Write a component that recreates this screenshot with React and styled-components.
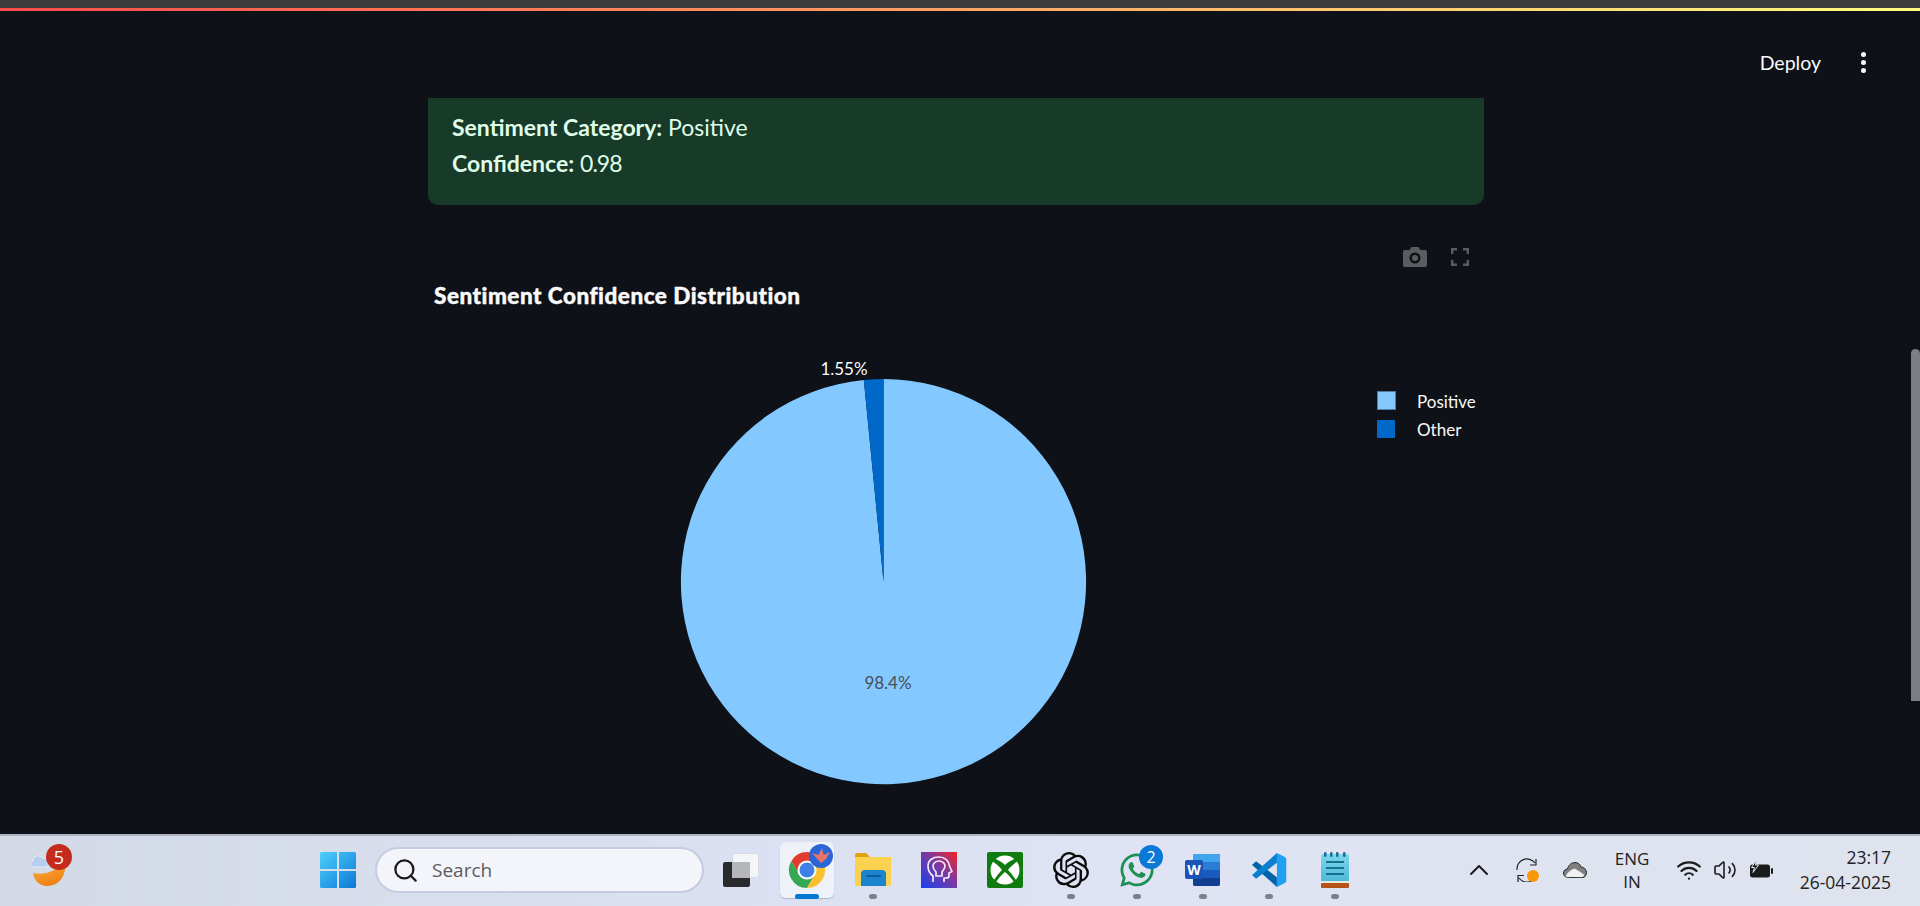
import React from 'react'
import styled, { createGlobalStyle } from 'styled-components'
import { ChevronUp, Search, Volume2, Wifi } from 'lucide-react'
import { SiOpenai } from 'react-icons/si'
import { FaWhatsapp } from 'react-icons/fa'

const GlobalStyle = createGlobalStyle`
  html, body {
    margin: 0;
    height: 100%;
    background: #0e1117;
    overflow: hidden;
  }
  #root {
    height: 100%;
  }
`

const Screen = styled.div`
  display: flex;
  flex-direction: column;
  height: 906px;
  width: 1920px;
  position: relative;
  font-family: 'Lato', 'Noto Sans', sans-serif;
`

const BrowserEdge = styled.div`
  height: 8px;
  background: #3c3c3c;
  flex-shrink: 0;
`

const Decoration = styled.div`
  height: 3px;
  background: linear-gradient(90deg, #ff4b4b, #fffd80);
  flex-shrink: 0;
`

const Main = styled.main`
  flex: 1;
  min-height: 0;
  overflow: hidden;
  background: #0e1117;
  padding-right: 8px;
`

const Header = styled.header`
  height: 87px;
  display: flex;
  align-items: center;
  justify-content: flex-end;
  padding: 16px 0 0;
  gap: 40px;
  box-sizing: border-box;
`

const DeployLabel = styled.span`
  color: #fafafa;
  font-size: 19.5px;
`

const Kebab = styled.div`
  display: flex;
  flex-direction: column;
  gap: 3px;
  margin-right: 46px;

  i {
    display: block;
    width: 5px;
    height: 5px;
    border-radius: 50%;
    background: #fafafa;
  }
`

const Column = styled.div`
  width: 1056px;
  margin: 0 auto;
`

const SuccessBox = styled.div`
  background: #183a29;
  color: #dffde9;
  border-radius: 0 0 10px 10px;
  padding: 11px 24px 24px;
  font-size: 23px;
  line-height: 36px;

  strong {
    font-weight: 700;
  }
`

const Score = styled.span`
  letter-spacing: -1px;
`

const ChartFrame = styled.div`
  position: relative;
  margin-top: 32px;
  height: 597px;
`

const ChartSvg = styled.svg`
  display: block;
  width: 1056px;
  height: 597px;
`

const ChartTitle = styled.text`
  font-size: 22.5px;
  font-weight: 900;
  letter-spacing: 0.5px;
  fill: #fafafa;
  stroke: #fafafa;
  stroke-width: 0.4px;
`

const PieLabel = styled.text`
  font-size: 17px;
  text-anchor: middle;
  fill: ${(p) => p.$fill};
`

const LegendText = styled.text`
  font-size: 17px;
  fill: #fafafa;
`

const ModeBar = styled.div`
  position: absolute;
  top: 10px;
  right: 15px;
  display: flex;
  align-items: center;
  gap: 24px;
  color: #5a5c60;
`

const Thumb = styled.div`
  position: absolute;
  right: 0;
  top: 349px;
  width: 9px;
  height: 352px;
  border-radius: 5px 5px 0 0;
  background: #7d7e82;
`

const Taskbar = styled.footer`
  height: 72px;
  flex-shrink: 0;
  box-sizing: border-box;
  border-top: 2px solid #aeb3c1;
  background: linear-gradient(90deg, #d3dae6 0%, #dbe1f2 40%, #dfe3f3 60%, #dee3ee 100%);
  display: flex;
  align-items: center;
  padding-bottom: 2px;
  color: #1c1c1c;
`

const WidgetSlot = styled.div`
  position: relative;
  width: 305px;
  height: 100%;
  flex-shrink: 0;
`

const WeatherIcon = styled.div`
  position: absolute;
  left: 28px;
  top: 13px;
`

const Badge = styled.span`
  position: absolute;
  display: flex;
  align-items: center;
  justify-content: center;
  border-radius: 50%;
  color: #fff;
  font-family: 'Open Sans', sans-serif;
  width: ${(p) => p.$size}px;
  height: ${(p) => p.$size}px;
  background: ${(p) => p.$bg};
  font-size: ${(p) => p.$size - 8}px;
  right: ${(p) => p.$right}px;
  top: ${(p) => p.$top}px;
`

const TaskButton = styled.div`
  position: relative;
  width: 66px;
  height: 68px;
  flex-shrink: 0;
  display: flex;
  align-items: center;
  justify-content: center;
`

const ActiveTile = styled.div`
  position: absolute;
  left: 6px;
  right: 6px;
  top: 6px;
  bottom: 6px;
  border-radius: 6px;
  background: rgba(255, 255, 255, 0.55);
  box-shadow: 0 1px 1px rgba(120, 125, 150, 0.45);
`

const RunDot = styled.span`
  position: absolute;
  bottom: 5px;
  left: 50%;
  transform: translateX(-50%);
  height: 5px;
  border-radius: 3px;
  width: ${(p) => (p.$active ? 24 : 8)}px;
  background: ${(p) => (p.$active ? '#0078d4' : '#7e8089')};
`

const IconLayer = styled.div`
  position: relative;
  display: flex;
`

const SearchSlot = styled.div`
  width: 337px;
  flex-shrink: 0;
  box-sizing: border-box;
  padding: 0 4px 0 4px;
`

const SearchBox = styled.div`
  height: 46px;
  box-sizing: border-box;
  border-radius: 23px;
  background: #f3f5fb;
  border: 2px solid #c6cce0;
  display: flex;
  align-items: center;
  gap: 13px;
  padding-left: 15px;
  color: #5c5c5c;
  font-family: 'Open Sans', sans-serif;
  font-size: 19px;

  svg {
    color: #1a1a1a;
  }
`

const Tray = styled.div`
  margin-left: auto;
  display: flex;
  align-items: center;
  padding-right: 29px;
  font-family: 'Open Sans', sans-serif;
`

const TraySlot = styled.div`
  position: relative;
  width: ${(p) => p.$w}px;
  display: flex;
  align-items: center;
  justify-content: center;
`

const StatusGroup = styled.div`
  display: flex;
  align-items: center;
  margin-left: 6px;
`

const StatusDot = styled.span`
  position: absolute;
  right: 12px;
  bottom: 0;
  width: 12px;
  height: 12px;
  border-radius: 50%;
  background: #f7980b;
`

const LangText = styled.div`
  text-align: center;
  font-size: 17px;
  line-height: 23px;
  color: #222;
`

const Clock = styled.div`
  width: 112px;
  text-align: right;
  font-size: 17.5px;
  line-height: 25px;
  color: #222;
`

// pie data, clockwise from the top like plotly does it
const slices = [
  { name: 'Positive', share: 0.9845, color: '#83c9ff' },
  { name: 'Other', share: 0.0155, color: '#0068c9' },
]

function slicePath(cx, cy, r, from, to) {
  const point = (t) => {
    const a = t * 2 * Math.PI
    return `${cx + r * Math.sin(a)} ${cy - r * Math.cos(a)}`
  }
  const large = to - from > 0.5 ? 1 : 0
  return `M${cx} ${cy} L${point(from)} A${r} ${r} 0 ${large} 1 ${point(to)} Z`
}

function PieChart() {
  let start = 0
  return (
    <ChartSvg viewBox="0 0 1056 597">
      <ChartTitle x="6" y="67">Sentiment Confidence Distribution</ChartTitle>
      {slices.map((s) => {
        const d = slicePath(455.5, 344.6, 202.6, start, start + s.share)
        start += s.share
        return <path key={s.name} d={d} fill={s.color} />
      })}
      <PieLabel x="416" y="138" $fill="#fafafa">1.55%</PieLabel>
      <PieLabel x="460" y="452" $fill="#4a4f57">98.4%</PieLabel>
      <rect x="949.5" y="154.5" width="18" height="18" fill="#83c9ff" stroke="#4f7da3" />
      <rect x="949" y="183" width="18" height="18" fill="#0068c9" />
      <LegendText x="989" y="171">Positive</LegendText>
      <LegendText x="989" y="199">Other</LegendText>
    </ChartSvg>
  )
}

const CameraIcon = () => (
  <svg width="24" height="20" viewBox="0 0 24 20">
    <path
      fillRule="evenodd"
      fill="currentColor"
      d="M2 3h4.500L8.500 0h7l2 3H22a2 2 0 0 1 2 2v13a2 2 0 0 1-2 2H2a2 2 0 0 1-2-2V5a2 2 0 0 1 2-2zM12 5.500a5.500 5.500 0 1 0 0 11 5.500 5.500 0 0 0 0-11zM12 8a3 3 0 1 1 0 6 3 3 0 0 1 0-6z"
    />
  </svg>
)

const FullscreenIcon = () => (
  <svg width="18" height="18" viewBox="0 0 18 18" fill="none" stroke="currentColor" strokeWidth="2.4">
    <path d="M1.200 6V1.200H6M12 1.200h4.800V6M16.800 12v4.800H12M6 16.800H1.200V12" />
  </svg>
)

const WeatherGlyph = () => (
  <svg width="46" height="44" viewBox="0 0 46 44">
    <defs>
      <linearGradient id="moon" x1="0.2" y1="0" x2="0.6" y2="1">
        <stop offset="0" stopColor="#fcb13c" />
        <stop offset="1" stopColor="#ee7f14" />
      </linearGradient>
    </defs>
    <path d="M5 24C14 26 30 24 36 10C40 22 34 37 19 37C11 37 6 31 5 24Z" fill="url(#moon)" />
    <path d="M5 18C1 18 1 12 5 12C5 7 12 5 14 9C18 8 21 12 20 18Z" fill="#b6cef0" stroke="#e8effa" />
  </svg>
)

const WindowsIcon = () => (
  <svg width="36" height="36" viewBox="0 0 36 36">
    <defs>
      <linearGradient id="win" x1="0" y1="0" x2="1" y2="1">
        <stop offset="0" stopColor="#4fd0fb" />
        <stop offset="1" stopColor="#0a78d6" />
      </linearGradient>
    </defs>
    <path d="M0 1.500A1.500 1.500 0 0 1 1.500 0H17v17H0zM19 0h15.500A1.500 1.500 0 0 1 36 1.500V17H19zM0 19h17v17H1.500A1.500 1.500 0 0 1 0 34.500zM19 19h17v15.500a1.500 1.500 0 0 1-1.500 1.500H19z" fill="url(#win)" />
  </svg>
)

const TaskViewIcon = () => (
  <svg width="36" height="36" viewBox="0 0 36 36">
    <rect x="9.500" y="1.500" width="26" height="24" rx="2" fill="#f4f5f9" stroke="#d8dae2" />
    <rect x="0" y="10" width="27" height="25" rx="2" fill="#2a2a2c" />
    <rect x="9" y="10" width="18" height="16" fill="#b5b6b8" />
  </svg>
)

const ChromeIcon = () => (
  <svg width="56" height="56" viewBox="0 0 56 56">
    <path d="M28 19H43.600A18 18 0 0 0 12.400 19L20.200 32.500Z" fill="#e33b2e" />
    <path d="M12.400 19A18 18 0 0 0 28 46L35.800 32.500H20.200Z" fill="#34a853" />
    <path d="M43.600 19A18 18 0 0 1 28 46L35.800 32.500L28 19Z" fill="#fbc02d" />
    <circle cx="28" cy="28" r="9.500" fill="#fff" />
    <circle cx="28" cy="28" r="7.500" fill="#3f7fe8" />
    <circle cx="42" cy="14" r="12" fill="#2b66d9" />
    <path d="M42 21L33 11L39.500 13L43 6L44.500 13L51 10L47 17Z" fill="#e8756a" />
  </svg>
)

const FolderIcon = () => (
  <svg width="36" height="36" viewBox="0 0 36 36">
    <path d="M0 3a2 2 0 0 1 2-2h9l4 4h19a2 2 0 0 1 2 2v4H0z" fill="#e0a30e" />
    <path d="M0 5h36v28a1 1 0 0 1-1 1H1a1 1 0 0 1-1-1z" fill="#fbd24f" />
    <path d="M6 34V22a4 4 0 0 1 4-4h17a4 4 0 0 1 4 4v12z" fill="#1c83cf" />
    <rect x="11" y="23" width="15" height="2" rx="1" fill="#0d5c9c" />
  </svg>
)

const AppIcon = () => (
  <svg width="36" height="36" viewBox="0 0 36 36">
    <defs>
      <linearGradient id="app" x1="0" y1="1" x2="1" y2="0">
        <stop offset="0" stopColor="#1642f0" />
        <stop offset="0.55" stopColor="#7a3aa0" />
        <stop offset="1" stopColor="#f52424" />
      </linearGradient>
    </defs>
    <rect width="36" height="36" fill="url(#app)" />
    <g fill="none" stroke="#f4e9fb" strokeWidth="1.700" strokeLinejoin="round">
      <path d="M12 30V24C8 21 7 17 7 14C7 8 12 5 18 5C24 5 28 9 28.500 14L31 19.500L28 21V24C28 25.500 27 26 25 26H23V30" />
      <path d="M15 24V20C13 18 12 16 12 14C12 11 15 9 18 9C21 9 24 11 24 14C24 17 22 18 21 20V24Z" />
    </g>
  </svg>
)

const XboxIcon = () => (
  <svg width="36" height="36" viewBox="0 0 36 36">
    <rect width="36" height="36" rx="2" fill="#107c10" />
    <circle cx="18" cy="18" r="14.500" fill="#fff" />
    <path
      d="M5 6C10 7 15 10 18 13C21 10 26 7 31 6L32 8C28 11 23 15 21 18C25 22 29 28 31 31L29 33C25 27 21 22 18 20C15 22 11 27 7 33L5 31C7 28 11 22 15 18C13 15 8 11 4 8Z"
      fill="#107c10"
    />
  </svg>
)

const WordIcon = () => (
  <svg width="36" height="36" viewBox="0 0 36 36">
    <rect x="8" y="2" width="27" height="32" rx="2" fill="#185abd" />
    <path d="M8 4a2 2 0 0 1 2-2h23a2 2 0 0 1 2 2v6H8z" fill="#41a5ee" />
    <rect x="8" y="10" width="27" height="8" fill="#2b7cd3" />
    <path d="M8 26h27v6a2 2 0 0 1-2 2H10a2 2 0 0 1-2-2z" fill="#103f91" />
    <rect x="0" y="8" width="18" height="19" rx="2" fill="#1a54b8" />
    <text x="9" y="22.500" fontSize="14" fontWeight="700" textAnchor="middle" fill="#fff" fontFamily="Open Sans, sans-serif">W</text>
  </svg>
)

const VsCodeIcon = () => (
  <svg width="36" height="36" viewBox="0 0 100 100">
    <path d="M72 97V70L14 26L3 36Z" fill="#0065a9" />
    <path d="M72 3V30L14 74L3 64Z" fill="#0a80cf" />
    <path d="M72 3L94 14C97 16 98 18 98 21V79C98 82 97 84 94 86L72 97Z" fill="#1fa0f2" />
  </svg>
)

const NotepadIcon = () => (
  <svg width="30" height="36" viewBox="0 0 30 36">
    <defs>
      <linearGradient id="pad" x1="0" y1="0" x2="0" y2="1">
        <stop offset="0" stopColor="#7fd6ee" />
        <stop offset="1" stopColor="#4cb8d6" />
      </linearGradient>
    </defs>
    <rect x="1" y="2" width="28" height="28" rx="2" fill="url(#pad)" />
    <rect x="1" y="31" width="28" height="5" rx="1" fill="#b5551a" />
    <rect x="1" y="29" width="28" height="2" fill="#eae8e0" />
    <g fill="#16708f">
      <rect x="4" y="0" width="2.500" height="5" rx="1.200" />
      <rect x="10" y="0" width="2.500" height="5" rx="1.200" />
      <rect x="16" y="0" width="2.500" height="5" rx="1.200" />
      <rect x="23" y="0" width="2.500" height="5" rx="1.200" />
      <rect x="6" y="9" width="18" height="2" />
      <rect x="6" y="15" width="18" height="2" />
      <rect x="6" y="21" width="18" height="2" />
    </g>
  </svg>
)

const SyncIcon = () => (
  <svg width="24" height="24" viewBox="0 0 24 24" fill="none" stroke="#222" strokeWidth="1.200">
    <path d="M2 12A10 10 0 0 1 20 5M21 1V7H15" />
    <path d="M22 14A10 10 0 0 1 4 20M3 24V17.500H9" />
  </svg>
)

const CloudIcon = () => (
  <svg width="24" height="16" viewBox="0 0 24 16">
    <path d="M5 15.300C2 15.300.5 13.500.5 11c0-2.500 2-4 4-4 1-4 4-6.500 7.500-6.500 3 0 5 1.500 6 4.500 3 0 5.500 2.500 5.500 5.500 0 3-2 5.300-4.500 5.300z" fill="#7f7f7f" stroke="#2b2b2b" strokeWidth="1" />
    <path d="M2.500 14c3-5 8-8 10-7s5 3 9 6c-1 1.500-2 2-3.500 2H5C4 15 3 14.800 2.500 14z" fill="#f0f0f0" />
  </svg>
)

const BatteryIcon = () => (
  <svg width="24" height="20" viewBox="0 0 24 20">
    <rect x="1" y="4.500" width="20" height="13" rx="2.500" fill="#1a1a1a" />
    <rect x="22" y="8" width="2" height="6" rx="1" fill="#1a1a1a" />
    <path d="M7.500 0L2.500 7.500H5.500L4 12.500L9.500 5H6.500Z" fill="#1a1a1a" stroke="#dde2ee" strokeWidth="1" />
  </svg>
)

const centerApps = [
  { key: 'folder', icon: <FolderIcon />, running: true },
  { key: 'app', icon: <AppIcon /> },
  { key: 'xbox', icon: <XboxIcon /> },
  { key: 'openai', icon: <SiOpenai size={36} color="#0b0b0b" />, running: true },
  {
    key: 'whatsapp',
    icon: <FaWhatsapp size={38} color="#1e8f55" />,
    running: true,
    badge: '2',
  },
  { key: 'word', icon: <WordIcon />, running: true },
  { key: 'vscode', icon: <VsCodeIcon />, running: true },
  { key: 'notepad', icon: <NotepadIcon />, running: true },
]

export default function App() {
  return (
    <Screen>
      <GlobalStyle />
      <BrowserEdge />
      <Decoration />
      <Main>
        <Header>
          <DeployLabel>Deploy</DeployLabel>
          <Kebab>
            <i />
            <i />
            <i />
          </Kebab>
        </Header>
        <Column>
          <SuccessBox>
            <div>
              <strong>Sentiment Category:</strong> Positive
            </div>
            <div>
              <strong>Confidence:</strong> <Score>0.98</Score>
            </div>
          </SuccessBox>
          <ChartFrame>
            <PieChart />
            <ModeBar>
              <CameraIcon />
              <FullscreenIcon />
            </ModeBar>
          </ChartFrame>
        </Column>
      </Main>
      <Thumb />
      <Taskbar>
        <WidgetSlot>
          <WeatherIcon>
            <WeatherGlyph />
          </WeatherIcon>
          <Badge $size={26} $bg="#c42b1c" $right={233} $top={8}>5</Badge>
        </WidgetSlot>
        <TaskButton>
          <WindowsIcon />
        </TaskButton>
        <SearchSlot>
          <SearchBox>
            <Search size={27} strokeWidth={2} />
            Search
          </SearchBox>
        </SearchSlot>
        <TaskButton>
          <TaskViewIcon />
        </TaskButton>
        <TaskButton>
          <ActiveTile />
          <IconLayer>
            <ChromeIcon />
          </IconLayer>
          <RunDot $active />
        </TaskButton>
        {centerApps.map((app) => (
          <TaskButton key={app.key}>
            {app.icon}
            {app.badge && <Badge $size={24} $bg="#0a78d6" $right={7} $top={9}>{app.badge}</Badge>}
            {app.running && <RunDot />}
          </TaskButton>
        ))}
        <Tray>
          <TraySlot $w={48}>
            <ChevronUp size={32} strokeWidth={1.5} />
          </TraySlot>
          <TraySlot $w={48}>
            <SyncIcon />
            <StatusDot />
          </TraySlot>
          <TraySlot $w={48}>
            <CloudIcon />
          </TraySlot>
          <TraySlot $w={66}>
            <LangText>
              ENG
              <br />
              IN
            </LangText>
          </TraySlot>
          <StatusGroup>
            <TraySlot $w={36}>
              <Wifi size={26} strokeWidth={2} />
            </TraySlot>
            <TraySlot $w={36}>
              <Volume2 size={24} strokeWidth={1.6} />
            </TraySlot>
            <TraySlot $w={36}>
              <BatteryIcon />
            </TraySlot>
          </StatusGroup>
          <Clock>
            23:17
            <br />
            26-04-2025
          </Clock>
        </Tray>
      </Taskbar>
    </Screen>
  )
}
